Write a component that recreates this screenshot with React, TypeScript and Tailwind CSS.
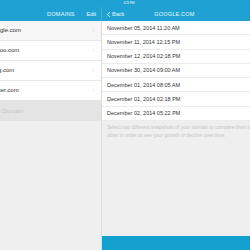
import { ChevronLeft, ChevronRight } from "lucide-react";

const domains = ["google.com", "yahoo.com", "bing.com", "twitter.com"];

const snapshots = [
  "November 05, 2014 11:20 AM",
  "November 11, 2014 12:15 PM",
  "November 12, 2014 02:18 PM",
  "November 30, 2014 09:00 AM",
  "December 01, 2014 08:05 AM",
  "December 01, 2014 02:18 PM",
  "December 02, 2014 05:22 PM",
];

export default function App() {
  return (
    <div
      className="flex h-[250px] w-[250px] flex-col overflow-hidden bg-[#efefef]"
      style={{ fontFamily: '"Liberation Sans", Arial, sans-serif' }}
    >
      <header className="flex h-[21px] flex-none flex-col bg-[#1fa2d3] text-white">
        <div className="flex h-[7px] items-center justify-center pl-[8px] text-[3px] leading-none">
          4:21 PM
        </div>
        <div className="flex flex-1 items-center">
          <div className="relative flex h-full w-[101px] flex-none items-center">
            <span className="ml-[47px] text-[5.5px] tracking-[0.3px] text-white/90">
              DOMAINS
            </span>
            <span className="ml-auto mr-[5px] text-[5.5px] text-white/90">Edit</span>
          </div>
          <div className="flex h-full flex-1 items-center border-l border-[#3fb0da]">
            <span className="ml-[2px] flex items-center text-[5.5px] text-white/90">
              <ChevronLeft size={9} strokeWidth={2.5} className="-mr-[1px]" />
              Back
            </span>
            <span className="ml-[30px] text-[5.5px] tracking-[0.2px] text-white/90">
              GOOGLE.COM
            </span>
          </div>
        </div>
      </header>

      <div className="flex flex-1">
        <aside className="w-[101px] flex-none overflow-hidden">
          {domains.map((domain, index) => (
            <div
              key={domain}
              className={`flex h-[20px] items-center border-b border-[#e7e7e7] ${
                index === 0 ? "bg-[#f6f6f6]" : "bg-white"
              }`}
            >
              <span className="-ml-[10px] text-[6px] text-[#333]">{domain}</span>
              <ChevronRight size={5} className="ml-auto mr-[5px] text-[#c8c8c8]" />
            </div>
          ))}
          <div className="flex h-[20px] items-center bg-[#e4e4e4]">
            <span className="-ml-[10px] text-[6px] text-[#c4c4c4]">Add Domain</span>
          </div>
        </aside>

        <main className="flex flex-1 flex-col overflow-hidden border-l border-[#dcdcdc]">
          <div className="bg-white">
            {snapshots.map((snapshot) => (
              <div
                key={snapshot}
                className="flex h-[14.3px] items-center border-b border-[#ececec] pl-[5px] text-[5.5px] text-[#333]"
              >
                {snapshot}
              </div>
            ))}
          </div>
          <p className="mt-[3px] whitespace-nowrap pl-[5px] text-[5px] leading-[7.5px] text-[#c6c6c6]">
            Select two different snapshots of your domain to compare them with each
            <br />
            other in order to see your growth or decline over time.
          </p>
          <div className="mt-auto h-[14px] bg-[#14a0cf]" />
        </main>
      </div>
    </div>
  );
}
